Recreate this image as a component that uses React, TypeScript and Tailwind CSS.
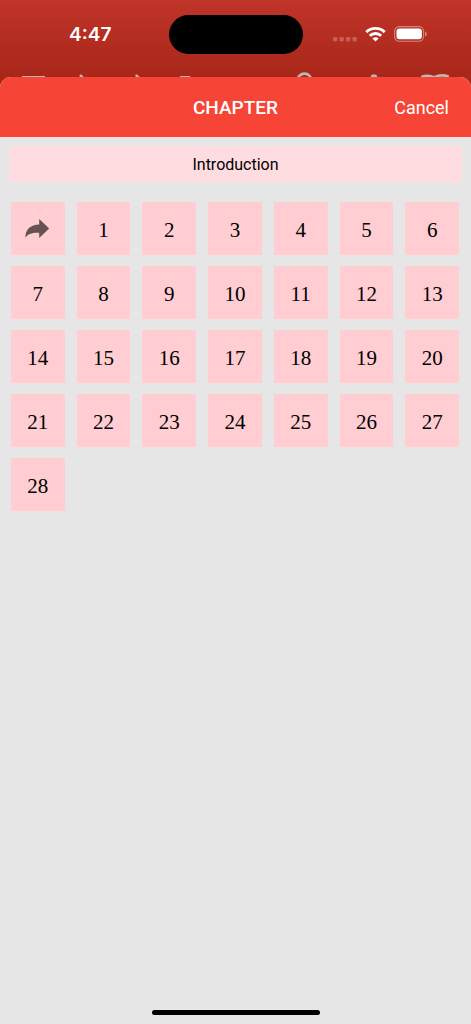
import type { ReactNode } from 'react';

const chapters = Array.from({ length: 28 }, (_, i) => i + 1);

const tile =
  'flex h-[53px] items-center justify-center bg-[#ffcdd2] font-["Liberation_Serif",serif] text-[21px] leading-6 text-black';

function WifiIcon() {
  return (
    <svg width="21" height="17" viewBox="0 0 21 17" fill="none" stroke="white" strokeWidth="2.9" aria-hidden="true">
      <path d="M1.3 6.1a13.2 13.2 0 0 1 18.4 0" />
      <path d="M4.8 9.8a8.2 8.2 0 0 1 11.4 0" />
      <path d="M10.5 15.6 7.4 12.5a4.4 4.4 0 0 1 6.2 0Z" fill="white" stroke="none" />
    </svg>
  );
}

function BatteryIcon() {
  return (
    <svg width="33" height="17" viewBox="0 0 33 17" fill="none" aria-hidden="true">
      <rect x=".6" y=".6" width="29" height="14.6" rx="4.6" stroke="white" strokeOpacity=".42" strokeWidth="1.1" />
      <rect x="2.5" y="2.5" width="25.4" height="10.8" rx="3" fill="white" />
      <path d="M31.2 5.6c2 .8 2 4 0 4.8Z" fill="white" fillOpacity=".5" />
    </svg>
  );
}

function StatusBar() {
  return (
    <div className="grid h-[72px] grid-cols-[1fr_134px_1fr] pt-[15px]">
      <div className="flex h-[39px] items-center justify-center pl-3 text-[19px] leading-6 font-semibold">4:47</div>
      <div className="h-[39px] rounded-full bg-black" />
      <div className="flex h-[39px] items-center justify-center gap-2 pr-3.5">
        <svg className="mt-2.5" width="24" height="5" viewBox="0 0 24 5" fill="white" fillOpacity=".24" aria-hidden="true">
          <rect x="0" width="4.4" height="4.4" rx="1.3" />
          <rect x="6.5" width="4.4" height="4.4" rx="1.3" />
          <rect x="13" width="4.4" height="4.4" rx="1.3" />
          <rect x="19.4" width="4.4" height="4.4" rx="1.3" />
        </svg>
        <WifiIcon />
        <BatteryIcon />
      </div>
    </div>
  );
}

function ToolButton({ label, children }: { label: string; children: ReactNode }) {
  return (
    <button type="button" aria-label={label} className="size-7">
      <svg width="28" height="28" viewBox="0 0 28 28" fill="none" stroke="#b9b9b7" strokeWidth="2.6">
        {children}
      </svg>
    </button>
  );
}

function Toolbar() {
  return (
    <nav className="flex h-7 justify-between pr-[22px] pl-5">
      <div className="flex gap-6">
        <ToolButton label="Menu">
          <path d="M2 5.3h23M2 13h23M2 21h23" />
        </ToolButton>
        <ToolButton label="Previous">
          <path d="M8.7 3.6l9 9-9 9" strokeLinecap="round" />
        </ToolButton>
        <ToolButton label="Next">
          <path d="M12.5 3.6l9 9-9 9" strokeLinecap="round" />
        </ToolButton>
        <ToolButton label="Bookmark">
          <path d="M5.3 5.3h7.6v16l-3.8-4-3.8 4z" />
        </ToolButton>
      </div>
      <div className="flex gap-[34px]">
        <ToolButton label="Search">
          <circle cx="7.5" cy="8.6" r="7" />
          <path d="M13 14l9 9" />
        </ToolButton>
        <ToolButton label="Text size">
          <path d="M6 25l8-20.5h2L24 25" strokeWidth="4" strokeLinejoin="round" />
        </ToolButton>
        <ToolButton label="Read">
          <path d="M13.5 5v17c-4-3-10-3-14 0V5c4-2.4 10-2.4 14 0z" fill="#b9b9b7" strokeWidth="1.5" />
          <path d="M14 5c4-2.2 10-2.2 14 0v17c-4-3-10-3-14 0" />
        </ToolButton>
      </div>
    </nav>
  );
}

export default function App() {
  return (
    <div className="flex min-h-screen flex-col bg-[#e6e6e6] font-[Inter,sans-serif] text-white">
      <header className="bg-linear-to-b from-[#c03429] to-[#a12314]">
        <StatusBar />
        <Toolbar />
      </header>

      <main className="relative -mt-[23px] flex flex-1 flex-col overflow-hidden rounded-t-[11px] bg-[#e6e6e6]">
        <div className="grid h-[60px] grid-cols-[1fr_auto_1fr] items-center bg-[#f64436] px-[22px] pt-0.5 font-[Roboto,sans-serif] leading-6">
          <h1 className="col-start-2 text-[19px] font-medium">CHAPTER</h1>
          <button type="button" className="justify-self-end text-lg">
            Cancel
          </button>
        </div>

        <div className="px-[9px] pt-[9px]">
          <button
            type="button"
            className="h-9 w-full bg-[#ffdce0] pt-px font-[Roboto,sans-serif] text-base text-black"
          >
            Introduction
          </button>
        </div>

        <div className="mt-5 grid grid-cols-7 gap-x-3 gap-y-[11px] pr-3 pl-[11px]">
          <button type="button" aria-label="Go to" className={tile}>
            <svg width="25" height="19" viewBox="0 0 25 19" fill="#665254" aria-hidden="true">
              <path d="M14.2 0 24.2 9.6 14.2 19v-5.3C7.7 13.3 3 14.5.4 18.7.3 10.3 5.4 5.9 14.2 5.5Z" />
            </svg>
          </button>
          {chapters.map(n => (
            <button key={n} type="button" className={`${tile} pt-0.5`}>
              {n}
            </button>
          ))}
        </div>

        <div className="mt-auto flex justify-center pb-[9px]">
          <div className="h-[5px] w-[168px] rounded-full bg-black" />
        </div>
      </main>
    </div>
  );
}
